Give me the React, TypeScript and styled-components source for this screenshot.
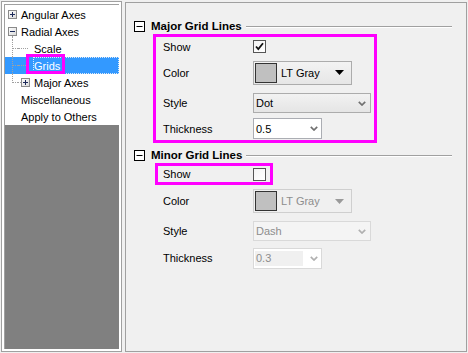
import React from "react";
import styled, { createGlobalStyle } from "styled-components";

const GlobalStyle = createGlobalStyle`
  html, body { margin: 0; padding: 0; background: #f0f0f0; }
  body { font-family: "Liberation Sans", Arial, sans-serif; font-size: 11px; color: #000; }
  * { box-sizing: border-box; }
`;

const Window = styled.div`
  display: flex;
  align-items: flex-start;
  width: 468px;
  height: 353px;
  padding-left: 1px;
  gap: 3px;
`;

/* ---------- Tree ---------- */
const TreePane = styled.div`
  margin-top: 1px;
  width: 121px;
  height: 351px;
  border: 1px solid #a0a0a0;
  background: #fff;
  padding: 2px;
  display: flex;
`;

const TreeView = styled.div`
  flex: 1;
  display: flex;
  flex-direction: column;
  border-left: 1px solid #a0a0a0;
  border-top: 1px solid #a0a0a0;
  background: #808080;
`;

const TreeList = styled.div`
  background: #fff;
  padding-top: 1px;
  display: flex;
  flex-direction: column;
`;

const TreeRow = styled.div<{ $selected?: boolean }>`
  position: relative;
  height: 17px;
  display: flex;
  align-items: center;
  white-space: nowrap;
  background: ${(p) => (p.$selected ? "#3399ff" : "transparent")};
  color: ${(p) => (p.$selected ? "#fff" : "#000")};
`;

const LineGutter = styled.span<{ $last?: boolean }>`
  position: relative;
  width: 13px;
  align-self: stretch;
  flex-shrink: 0;
  &::before {
    content: "";
    position: absolute;
    left: 7px;
    top: 0;
    height: ${(p) => (p.$last ? "9px" : "100%")};
    border-left: 1px dotted #a0a0a0;
  }
  &::after {
    content: "";
    position: absolute;
    left: 8px;
    right: 0;
    top: 8px;
    border-top: 1px dotted #a0a0a0;
  }
`;

const Gutter = styled.span<{ $branch?: "leaf" | "node"; $open?: boolean }>`
  position: relative;
  width: 16px;
  align-self: stretch;
  flex-shrink: 0;
  display: flex;
  align-items: center;
  padding-left: 3px;
  &::before {
    content: "";
    position: absolute;
    left: 0;
    top: 8px;
    width: ${(p) => (p.$branch === "leaf" ? "10px" : p.$branch === "node" ? "3px" : "0")};
    border-top: ${(p) => (p.$branch ? "1px dotted #a0a0a0" : "none")};
  }
  &::after {
    content: "";
    position: absolute;
    left: 7px;
    top: 13px;
    bottom: 0;
    border-left: ${(p) => (p.$open ? "1px dotted #a0a0a0" : "none")};
  }
`;

const TreeLabel = styled.span<{ $selected?: boolean }>`
  flex: 1;
  align-self: stretch;
  display: flex;
  align-items: center;
  margin-left: -1px;
  border: 1px dotted ${(p) => (p.$selected ? "#dde9f7" : "transparent")};
`;

const Annotation = styled.span`
  position: absolute;
  left: 21px;
  top: -3px;
  width: 39px;
  height: 20px;
  border: 3px solid #ff00ff;
  pointer-events: none;
`;

const TreeExpander = ({ open }: { open?: boolean }) => (
  <svg width="9" height="9" viewBox="0 0 9 9" style={{ position: "relative", zIndex: 1 }}>
    <defs>
      <linearGradient id="exg" x1="0" y1="0" x2="1" y2="1">
        <stop offset="0" stopColor="#ffffff" />
        <stop offset="1" stopColor="#d8d8d8" />
      </linearGradient>
    </defs>
    <rect x="0.5" y="0.5" width="8" height="8" fill="url(#exg)" stroke="#8a8a8a" />
    <line x1="2" y1="4.5" x2="7" y2="4.5" stroke="#1c2a5a" />
    {!open && <line x1="4.5" y1="2" x2="4.5" y2="7" stroke="#1c2a5a" />}
  </svg>
);

/* ---------- Property pane ---------- */
const PropPane = styled.div`
  margin-top: 2px;
  width: 342px;
  height: 350px;
  border: 1px solid #a0a0a0;
  background: #f0f0f0;
  padding-top: 15px;
  display: flex;
  flex-direction: column;
`;

const SectionHeader = styled.div<{ $gap?: number }>`
  height: 16px;
  margin-top: ${(p) => p.$gap ?? 0}px;
  display: flex;
  align-items: center;
  padding-left: 8px;
`;

const SectionTitle = styled.span`
  margin-left: 6px;
  font-weight: bold;
  font-size: 11.5px;
  white-space: nowrap;
`;

const SectionRule = styled.span`
  flex: 1;
  height: 2px;
  margin: 1px 14px 0 4px;
  border-top: 1px solid #a0a0a0;
  border-bottom: 1px solid #fff;
`;

const Highlight = styled.div<{ $left: number; $width: number; $pad: number }>`
  margin-left: ${(p) => p.$left}px;
  width: ${(p) => p.$width}px;
  border: 3px solid #ff00ff;
  padding-left: ${(p) => p.$pad}px;
  display: flex;
  flex-direction: column;
`;

const Row = styled.div<{ $h: number; $indent?: number }>`
  height: ${(p) => p.$h}px;
  display: flex;
  align-items: center;
  padding-left: ${(p) => p.$indent ?? 0}px;
`;

const Label = styled.span`
  width: 90px;
  flex-shrink: 0;
`;

const CheckBox = styled.span`
  width: 13px;
  height: 13px;
  border: 1px solid #555;
  background: linear-gradient(135deg, #f4f4f4, #ffffff);
  display: flex;
  align-items: center;
  justify-content: center;
`;

const ColorCombo = styled.div<{ $disabled?: boolean }>`
  width: 99px;
  height: 24px;
  padding: 1px;
  display: flex;
  align-items: center;
  border: 1px solid ${(p) => (p.$disabled ? "#cfcfcf" : "#acacac")};
  background: ${(p) =>
    p.$disabled ? "#f0f0f0" : "linear-gradient(#f3f3f3, #e6e6e6)"};
  color: ${(p) => (p.$disabled ? "#8d8d8d" : "#000")};
`;

const Swatch = styled.span<{ $color: string }>`
  width: 22px;
  height: 20px;
  border: 1px solid #333;
  background: ${(p) => p.$color};
  flex-shrink: 0;
`;

const ComboText = styled.span<{ $gap?: number }>`
  margin-left: ${(p) => p.$gap ?? 0}px;
  flex: 1;
  white-space: nowrap;
`;

const ArrowSlot = styled.span<{ $right: number }>`
  display: flex;
  align-items: center;
  margin-right: ${(p) => p.$right}px;
`;

const Select = styled.div<{ $disabled?: boolean }>`
  width: 118px;
  height: 20px;
  padding-left: 2px;
  display: flex;
  align-items: center;
  border: 1px solid ${(p) => (p.$disabled ? "#d9d9d9" : "#acacac")};
  background: ${(p) =>
    p.$disabled ? "#f4f4f4" : "linear-gradient(#f2f2f2, #e5e5e5)"};
  color: ${(p) => (p.$disabled ? "#8d8d8d" : "#000")};
`;

const NumCombo = styled.div<{ $disabled?: boolean }>`
  width: 69px;
  height: 21px;
  padding: 1px;
  display: flex;
  align-items: center;
  border: 1px solid ${(p) => (p.$disabled ? "#d9d9d9" : "#abadb3")};
  background: #fff;
  color: ${(p) => (p.$disabled ? "#8d8d8d" : "#000")};
`;

const NumField = styled.span<{ $disabled?: boolean }>`
  width: 48px;
  align-self: stretch;
  margin: 1px 0;
  padding-left: ${(p) => (p.$disabled ? 1 : 1)}px;
  display: flex;
  align-items: center;
  background: ${(p) => (p.$disabled ? "#f0f0f0" : "transparent")};
`;

const NumArrow = styled.span`
  flex: 1;
  display: flex;
  align-items: center;
  justify-content: flex-end;
  padding-right: 2px;
`;

const MinusBox = () => (
  <svg width="11" height="11" viewBox="0 0 11 11">
    <rect x="0.5" y="0.5" width="10" height="10" fill="#fff" stroke="#000" />
    <line x1="2.5" y1="5.5" x2="8.5" y2="5.5" stroke="#000" />
  </svg>
);

const CheckMark = () => (
  <svg width="11" height="11" viewBox="0 0 11 11">
    <path d="M2 5.5 L4.3 8 L9 2.2" fill="none" stroke="#111" strokeWidth="1.8" />
  </svg>
);

const Triangle = ({ color }: { color: string }) => (
  <svg width="9" height="5" viewBox="0 0 9 5">
    <polygon points="0,0 9,0 4.5,5" fill={color} />
  </svg>
);

const Chevron = ({ color }: { color: string }) => (
  <svg width="8" height="5" viewBox="0 0 8 5">
    <polyline points="0.8,0.8 4,4 7.2,0.8" fill="none" stroke={color} strokeWidth="1.7" />
  </svg>
);

type TreeItem = {
  label: string;
  level: 0 | 1;
  expander?: "open" | "closed";
  last?: boolean;
  selected?: boolean;
  annotated?: boolean;
};

const treeItems: TreeItem[] = [
  { label: "Angular Axes", level: 0, expander: "closed" },
  { label: "Radial Axes", level: 0, expander: "open" },
  { label: "Scale", level: 1 },
  { label: "Grids", level: 1, selected: true, annotated: true },
  { label: "Major Axes", level: 1, expander: "closed", last: true },
  { label: "Miscellaneous", level: 0 },
  { label: "Apply to Others", level: 0 },
];

export default function App() {
  return (
    <>
      <GlobalStyle />
      <Window>
        <TreePane>
          <TreeView>
            <TreeList>
              {treeItems.map((it) => (
                <TreeRow key={it.label} $selected={it.selected}>
                  {it.level === 1 && <LineGutter $last={it.last} />}
                  <Gutter
                    $branch={it.level === 1 ? (it.expander ? "node" : "leaf") : undefined}
                    $open={it.expander === "open"}
                  >
                    {it.expander && <TreeExpander open={it.expander === "open"} />}
                  </Gutter>
                  <TreeLabel $selected={it.selected}>{it.label}</TreeLabel>
                  {it.annotated && <Annotation />}
                </TreeRow>
              ))}
            </TreeList>
          </TreeView>
        </TreePane>

        <PropPane>
          <SectionHeader>
            <MinusBox />
            <SectionTitle>Major Grid Lines</SectionTitle>
            <SectionRule />
          </SectionHeader>
          <Highlight $left={27} $width={224} $pad={7}>
            <Row $h={19}>
              <Label>Show</Label>
              <CheckBox>
                <CheckMark />
              </CheckBox>
            </Row>
            <Row $h={33}>
              <Label>Color</Label>
              <ColorCombo>
                <Swatch $color="#c0c0c0" />
                <ComboText $gap={4}>LT Gray</ComboText>
                <ArrowSlot $right={6}>
                  <Triangle color="#000" />
                </ArrowSlot>
              </ColorCombo>
            </Row>
            <Row $h={28}>
              <Label>Style</Label>
              <Select>
                <ComboText>Dot</ComboText>
                <ArrowSlot $right={4}>
                  <Chevron color="#707070" />
                </ArrowSlot>
              </Select>
            </Row>
            <Row $h={23}>
              <Label>Thickness</Label>
              <NumCombo>
                <NumField>0.5</NumField>
                <NumArrow>
                  <Chevron color="#707070" />
                </NumArrow>
              </NumCombo>
            </Row>
          </Highlight>

          <SectionHeader $gap={4}>
            <MinusBox />
            <SectionTitle>Minor Grid Lines</SectionTitle>
            <SectionRule />
          </SectionHeader>
          <Highlight $left={29} $width={118} $pad={5}>
            <Row $h={16}>
              <Label>Show</Label>
              <CheckBox />
            </Row>
          </Highlight>
          <Row $h={32} $indent={37}>
            <Label>Color</Label>
            <ColorCombo $disabled>
              <Swatch $color="#c0c0c0" />
              <ComboText $gap={4}>LT Gray</ComboText>
              <ArrowSlot $right={6}>
                <Triangle color="#9a9a9a" />
              </ArrowSlot>
            </ColorCombo>
          </Row>
          <Row $h={28} $indent={37}>
            <Label>Style</Label>
            <Select $disabled>
              <ComboText>Dash</ComboText>
              <ArrowSlot $right={4}>
                <Chevron color="#b0b0b0" />
              </ArrowSlot>
            </Select>
          </Row>
          <Row $h={26} $indent={37}>
            <Label>Thickness</Label>
            <NumCombo $disabled>
              <NumField $disabled>0.3</NumField>
              <NumArrow>
                <Chevron color="#b0b0b0" />
              </NumArrow>
            </NumCombo>
          </Row>
        </PropPane>
      </Window>
    </>
  );
}
